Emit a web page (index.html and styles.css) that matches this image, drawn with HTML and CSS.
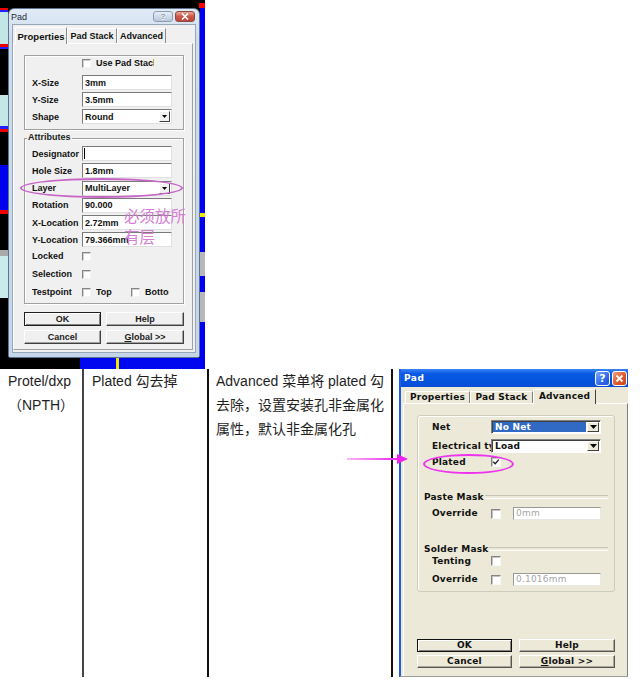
FILE: index.html
```html
<!DOCTYPE html>
<html lang="zh-CN">
<head>
<meta charset="utf-8">
<title>Pad</title>
<link rel="stylesheet" href="styles.css">
</head>
<body>
<div class="shot">
  <div class="dlg1">
    <div class="tb1">
      <span class="tb1-title">Pad</span>
      <span class="tb1-btns">
        <span class="tb1-q">?</span>
        <span class="tb1-x"><svg width="8" height="7" viewBox="0 0 8 7"><path d="M1 0.5L7 6.5M7 0.5L1 6.5" stroke="#fff" stroke-width="1.6"/></svg></span>
      </span>
    </div>
    <div class="cl1">
      <div class="tabs1">
        <span class="t1 t1-sel t1-w1">Properties</span><span class="t1 t1-w2">Pad Stack</span><span class="t1 t1-w3">Advanced</span>
      </div>
      <div class="pn1">
        <div class="gb1 gb1-a">
          <div class="r1 r1-cb"><span class="lab1"></span><span class="cb1"></span><span class="cbt1 cbt1-use">Use Pad Stack</span></div>
          <div class="r1"><span class="lab1">X-Size</span><span class="in1">3mm</span></div>
          <div class="r1"><span class="lab1">Y-Size</span><span class="in1">3.5mm</span></div>
          <div class="r1"><span class="lab1">Shape</span><span class="in1 sel1"><span class="selv1">Round</span><span class="dd1"><svg width="5" height="3" viewBox="0 0 5 3"><path d="M0 0H5L2.5 3Z" fill="#000"/></svg></span></span></div>
        </div>
        <div class="gb1 gb1-b">
          <span class="lg1">Attributes</span>
          <div class="r1"><span class="lab1">Designator</span><span class="in1"><span class="caret1"></span></span></div>
          <div class="r1"><span class="lab1">Hole Size</span><span class="in1">1.8mm</span></div>
          <div class="r1"><span class="lab1">Layer</span><span class="in1 sel1"><span class="selv1">MultiLayer</span><span class="dd1"><svg width="5" height="3" viewBox="0 0 5 3"><path d="M0 0H5L2.5 3Z" fill="#000"/></svg></span></span></div>
          <div class="r1"><span class="lab1">Rotation</span><span class="in1">90.000</span></div>
          <div class="r1"><span class="lab1">X-Location</span><span class="in1">2.72mm</span></div>
          <div class="r1"><span class="lab1">Y-Location</span><span class="in1">79.366mm</span></div>
          <div class="r1 r1-cb"><span class="lab1">Locked</span><span class="cb1"></span></div>
          <div class="r1 r1-cb"><span class="lab1">Selection</span><span class="cb1"></span></div>
          <div class="r1 r1-cb"><span class="lab1">Testpoint</span><span class="cb1"></span><span class="cbt1 cbt1-top">Top</span><span class="cb1"></span><span class="cbt1 cbt1-bot">Bottom</span></div>
        </div>
        <div class="bt1row bt1row-a"><span class="bt1 bt1-def bt1-w1">OK</span><span class="bt1 bt1-w2">Help</span></div>
        <div class="bt1row bt1row-b"><span class="bt1 bt1-w1">Cancel</span><span class="bt1 bt1-w2"><u>G</u>lobal &gt;&gt;</span></div>
      </div>
    </div>
  </div>
  <span class="ell1"></span>
  <span class="note1">必须放所有层</span>
</div>

<div class="tbl">
  <div class="c c1">Protel/dxp<br>（NPTH）</div>
  <div class="c c2">Plated 勾去掉</div>
  <div class="c c3">Advanced 菜单将 plated 勾去除，设置安装孔非金属化属性，默认非金属化孔</div>
  <div class="c c4">
    <div class="dlg2">
      <div class="tb2">
        <span class="tb2-title">Pad</span>
        <span class="tb2-btns">
          <span class="tb2-q">?</span>
          <span class="tb2-x"><svg width="9" height="9" viewBox="0 0 9 9"><path d="M1.5 1.5L7.5 7.5M7.5 1.5L1.5 7.5" stroke="#fff" stroke-width="1.8"/></svg></span>
        </span>
      </div>
      <div class="tabs2">
        <span class="t2 t2-w1">Properties</span><span class="t2 t2-w2">Pad Stack</span><span class="t2 t2-sel t2-w3">Advanced</span>
      </div>
      <div class="pn2">
        <div class="gb2">
          <div class="r2"><span class="lab2">Net</span><span class="sel2"><span class="selv2 selv2-hl">No Net</span><span class="dd2"><svg width="7" height="4" viewBox="0 0 7 4"><path d="M0 0H7L3.5 4Z" fill="#000"/></svg></span></span></div>
          <div class="r2 r2-elec"><span class="lab2">Electrical type</span><span class="sel2"><span class="selv2">Load</span><span class="dd2"><svg width="7" height="4" viewBox="0 0 7 4"><path d="M0 0H7L3.5 4Z" fill="#000"/></svg></span></span></div>
          <div class="r2 r2-cb r2-plated"><span class="lab2">Plated</span><span class="cb2"><svg width="8" height="8" viewBox="0 0 8 8"><path d="M1.2 3.8L3.2 5.8L6.8 1.6" fill="none" stroke="#222" stroke-width="1.4"/></svg></span></div>
          <div class="lg2 lg2-paste">Paste Mask</div>
          <div class="r2 r2-in r2-po"><span class="lab2">Override</span><span class="cb2"></span><span class="in2">0mm</span></div>
          <div class="lg2 lg2-solder">Solder Mask</div>
          <div class="r2 r2-cb"><span class="lab2">Tenting</span><span class="cb2"></span></div>
          <div class="r2 r2-in r2-so"><span class="lab2">Override</span><span class="cb2"></span><span class="in2">0.1016mm</span></div>
        </div>
        <div class="bt2row bt2row-a"><span class="bt2 bt2-def bt2-w1">OK</span><span class="bt2 bt2-w2">Help</span></div>
        <div class="bt2row bt2row-b"><span class="bt2 bt2-w1">Cancel</span><span class="bt2 bt2-w2"><u>G</u>lobal &gt;&gt;</span></div>
      </div>
    </div>
  </div>
  <svg class="arrow" width="64" height="14" viewBox="0 0 64 14">
    <defs><linearGradient id="ag" gradientUnits="userSpaceOnUse" x1="2" y1="0" x2="54" y2="0"><stop offset="0" stop-color="#f8b8f8"/><stop offset="1" stop-color="#ee22ee"/></linearGradient></defs>
    <rect x="2" y="6" width="52" height="2" fill="url(#ag)"/>
    <path d="M52 2L63 7L52 12Z" fill="#ee22ee"/>
  </svg>
  <span class="ell2"></span>
</div>
</body>
</html>
```

FILE: styles.css
```css
* { box-sizing: border-box; margin: 0; padding: 0; }
html, body { background: #fff; }
body {
  width: 643px;
  height: 686px;
  overflow: hidden;
  font-family: "Liberation Sans", Arial, "Noto Sans CJK SC", sans-serif;
  color: #1c1c1c;
}

/* ---------- top screenshot ---------- */
.shot {
  position: relative;
  width: 205px;
  height: 369px;
  padding: 8px 0 0 8px;
  background-color: #000;
  background-repeat: no-repeat;
  background-image:
    linear-gradient(#f00, #f00),
    linear-gradient(to bottom, #000 0 8px, #0000f4 8px 213px, #f2e600 213px 217px, #0000f4 217px 252px, #b8b8b8 252px 276px, #0000f4 276px 292px, #b8b8b8 292px 322px, #0000f4 322px),
    linear-gradient(to bottom, #000 0 8px, #e00 8px 10px, #2222ff 10px 12px, #c2e6e6 12px 44px, #e00 44px 47px, #2222ff 47px 49px, #000 49px 95px, #c4e6e6 95px 126px, #2222ff 126px 129px, #e00 129px 132px, #000 132px 165px, #0000ee 165px 210px, #e00 210px 214px, #000 214px 250px, #aaa 250px 256px, #c8ecec 256px 298px, #000 298px),
    linear-gradient(to right, #000 0 80px, #0008f0 80px 116px, #f5e400 116px 119px, #0008f0 119px);
  background-size: 6px 5px, 5px 100%, 8px 100%, 100% 11px;
  background-position: right 0 top 3px, right top, left top, left bottom;
}

.dlg1 {
  width: 192px;
  height: 350px;
  display: flex;
  flex-direction: column;
  padding: 0 3px 4px;
  border: 1px solid #5d7390;
  border-radius: 6px 6px 2px 2px;
  background: linear-gradient(#e2ebf6, #cddcee 30px, #c5d6ea);
}
.tb1 {
  height: 15px;
  flex: none;
  display: flex;
  align-items: center;
  justify-content: space-between;
}
.tb1-title { font-size: 9px; color: #1e2a3a; margin-left: -1px; }
.tb1-btns { display: flex; gap: 2px; margin-right: 1px; }
.tb1-q, .tb1-x {
  width: 20px;
  height: 11px;
  border-radius: 3px;
  display: flex;
  align-items: center;
  justify-content: center;
}
.tb1-q {
  border: 1px solid #8c9db3;
  background: linear-gradient(#e6edf6, #b9c8da);
  font-size: 8px;
  font-weight: bold;
  color: #8a97a8;
  text-shadow: 0 1px 0 #fff;
}
.tb1-x {
  border: 1px solid #8d4a45;
  background: linear-gradient(#eaa698, #cc5849 50%, #c0463a);
}

.cl1 {
  flex: 1;
  display: flex;
  flex-direction: column;
  background: #f0f0f0;
  border: 1px solid #97a6b8;
  padding: 0 2px 2px 0;
}
.tabs1 {
  height: 18px;
  flex: none;
  display: flex;
  align-items: flex-end;
  padding-left: 2px;
}
.t1 {
  height: 15px;
  display: flex;
  align-items: center;
  justify-content: center;
  border: 1px solid;
  border-color: #fff #8a8a8a transparent #fff;
  border-bottom: none;
  font-size: 9px;
  font-weight: bold;
  white-space: nowrap;
  color: #111;
}
.t1-sel {
  height: 17px;
  margin-bottom: -1px;
  position: relative;
  z-index: 1;
  background: #f0f0f0;
  font-size: 9.5px;
}
.t1-w1 { width: 52px; }
.t1-w2 { width: 50px; }
.t1-w3 { width: 49px; }

.pn1 {
  flex: 1;
  display: flex;
  flex-direction: column;
  border: 1px solid;
  border-color: #fff #a0a0a0 #a0a0a0 #fff;
  padding-left: 10px;
}
.gb1 {
  width: 160px;
  flex: none;
  display: flex;
  flex-direction: column;
  border: 1px solid #a0a0a0;
  box-shadow: inset 1px 1px 0 #fff, 1px 1px 0 #fff;
  padding-left: 7px;
}
.gb1-a { margin-top: 11px; height: 75px; }
.gb1-b { margin-top: 8px; height: 166px; padding-top: 7px; position: relative; }
.lg1 {
  position: absolute;
  top: -7px;
  left: 2px;
  padding: 0 1px;
  background: #f0f0f0;
  font-size: 9px;
  font-weight: bold;
  line-height: 11px;
}

.r1 {
  height: 15px;
  flex: none;
  display: flex;
  align-items: center;
  font-size: 9px;
  font-weight: bold;
  white-space: nowrap;
  color: #111;
}
.r1-cb { height: 14px; }
.gb1-a .r1 + .r1 { margin-top: 2px; }
.gb1-a .r1-cb + .r1 { margin-top: 5px; }
.gb1-b .r1 + .r1 { margin-top: 2.25px; }
.gb1-b .r1 + .r1-cb { margin-top: 1.75px; }
.gb1-b .r1-cb + .r1-cb { margin-top: 4px; }

.lab1 { width: 50px; flex: none; overflow: hidden; }
.in1 {
  width: 90px;
  height: 15px;
  flex: none;
  display: flex;
  align-items: center;
  padding-left: 2px;
  overflow: hidden;
  background: #fff;
  border: 1px solid;
  border-color: #7a7a7a #e0e0e0 #e0e0e0 #7a7a7a;
  color: #111;
}
.sel1 { padding-right: 1px; }
.selv1 { flex: 1; }
.dd1 {
  width: 11px;
  height: 11px;
  flex: none;
  display: flex;
  align-items: center;
  justify-content: center;
  background: #f0f0f0;
  border: 1px solid;
  border-color: #fff #404040 #404040 #fff;
}
.caret1 { width: 1px; height: 11px; background: #000; margin-left: -1px; }
.cb1 {
  width: 9px;
  height: 9px;
  flex: none;
  background: #fff;
  border: 1px solid;
  border-color: #858585 #f4f4f4 #f4f4f4 #858585;
  box-shadow: inset 1px 1px 0 #d0d0d0;
}
.cbt1 { margin-left: 5px; overflow: hidden; }
.cbt1-use { width: 58px; }
.cbt1-top { width: 35px; }
.cbt1-bot { width: 24px; }

.bt1row { display: flex; gap: 5px; flex: none; }
.bt1row-a { margin-top: 8px; }
.bt1row-b { margin-top: 4px; }
.bt1 {
  height: 14px;
  display: flex;
  align-items: center;
  justify-content: center;
  background: #f0f0f0;
  border: 1px solid;
  border-color: #fff #404040 #404040 #fff;
  box-shadow: inset -1px -1px 0 #a0a0a0;
  font-size: 9px;
  font-weight: bold;
  white-space: nowrap;
}
.bt1-def {
  border-color: #202020;
  box-shadow: inset 1px 1px 0 #fff, inset -1px -1px 0 #808080;
}
.bt1-w1 { width: 77px; }
.bt1-w2 { width: 78px; }

.ell1 {
  position: absolute;
  left: 20px;
  top: 178px;
  width: 163px;
  height: 20px;
  border: 2px solid #c864c8;
  border-radius: 50%;
}
.note1 {
  position: absolute;
  left: 124px;
  top: 205px;
  width: 64px;
  font-family: "Noto Sans CJK SC", sans-serif;
  font-size: 15.5px;
  line-height: 21px;
  color: #d47ed4;
}

/* ---------- table ---------- */
.tbl {
  position: relative;
  display: grid;
  grid-template-columns: 82px 125px 184px 1fr;
  height: 308px;
  font-size: 14px;
  line-height: 24px;
  color: #1e1e1e;
}
.c1 { padding-left: 8px; }
.c2 { border-left: 2px solid #444; padding-left: 8px; }
.c3 { border-left: 2px solid #111; padding-left: 7px; }
.c4 { border-left: 2px solid #111; padding-left: 6px; }

.arrow { position: absolute; left: 345px; top: 83px; }
.ell2 {
  position: absolute;
  left: 423px;
  top: 85px;
  width: 91px;
  height: 20px;
  border: 2px solid #ee33ee;
  border-radius: 50%;
}

/* ---------- XP dialog ---------- */
.dlg2 {
  width: 229px;
  height: 308px;
  display: flex;
  flex-direction: column;
  background: #ece9d8;
  border-left: 2px solid #1d5fe0;
  border-bottom: 1px solid #9d9d95;
  font-family: "DejaVu Sans", Verdana, sans-serif;
  font-size: 9px;
  font-weight: bold;
  letter-spacing: 0.2px;
  line-height: 1;
  color: #111;
}
.tb2 {
  height: 18px;
  flex: none;
  display: flex;
  align-items: center;
  justify-content: space-between;
  padding-left: 3px;
  background: linear-gradient(#3b86f5, #0a5ae6 25%, #0453df 70%, #0a4cd2);
}
.tb2-title { color: #fff; letter-spacing: 0.5px; }
.tb2-btns { display: flex; gap: 2px; margin-right: 1px; }
.tb2-q, .tb2-x {
  width: 15px;
  height: 15px;
  border: 1px solid #fff;
  border-radius: 3px;
  display: flex;
  align-items: center;
  justify-content: center;
  color: #fff;
}
.tb2-q { background: linear-gradient(135deg, #7aaaff, #2f68ea 60%, #1f55d8); font-size: 11px; }
.tb2-x { background: linear-gradient(135deg, #f3a07a, #e0592f 55%, #cc4418); }

.tabs2 {
  height: 14px;
  margin-top: 2px;
  flex: none;
  display: flex;
  align-items: flex-end;
  padding-left: 4px;
}
.t2 {
  height: 12px;
  display: flex;
  align-items: center;
  justify-content: center;
  border: 1px solid;
  border-color: #fff #808080 transparent #fff;
  border-bottom: none;
  white-space: nowrap;
}
.t2-sel {
  height: 15px;
  margin-bottom: -1px;
  position: relative;
  z-index: 1;
  background: #ece9d8;
  border-right-color: #404040;
  padding-bottom: 2px;
}
.t2-w1 { width: 65px; }
.t2-w2 { width: 63px; }
.t2-w3 { width: 63px; }

.pn2 {
  flex: 1;
  display: flex;
  flex-direction: column;
  margin-left: 2px;
  border-top: 1px solid #fff;
  border-left: 1px solid #fff;
  border-right: 1px solid #808080;
  padding-left: 13px;
}
.gb2 {
  width: 198px;
  height: 177px;
  flex: none;
  margin-top: 11px;
  display: flex;
  flex-direction: column;
  padding-top: 4px;
  border: 1px solid #cdcdbd;
  border-radius: 3px;
  box-shadow: inset 1px 1px 0 #fff;
}
.r2 {
  height: 14px;
  flex: none;
  display: flex;
  align-items: center;
  padding-left: 14px;
  white-space: nowrap;
}
.r2-cb { height: 12px; }
.r2-in { height: 13px; }
.r2-elec { margin-top: 5px; }
.r2-plated { margin-top: 3px; }
.r2-po { margin-top: 4px; }
.r2-so { margin-top: 6px; }
.lab2 { width: 59px; flex: none; overflow: hidden; }

.sel2 {
  width: 110px;
  height: 14px;
  flex: none;
  display: flex;
  align-items: stretch;
  padding: 1px;
  background: #fff;
  border: 1px solid;
  border-color: #808080 #fff #fff #808080;
  box-shadow: inset 1px 1px 0 #404040;
}
.selv2 {
  flex: 1;
  display: flex;
  align-items: center;
  padding-left: 2px;
  margin-right: 1px;
}
.selv2-hl { background: #316ac5; color: #fff; }
.dd2 {
  width: 12px;
  flex: none;
  display: flex;
  align-items: center;
  justify-content: center;
  background: #ece9d8;
  border: 1px solid;
  border-color: #fff #404040 #404040 #fff;
}
.cb2 {
  width: 10px;
  height: 10px;
  flex: none;
  display: flex;
  align-items: center;
  justify-content: center;
  background: #fff;
  border: 1px solid;
  border-color: #858585 #f8f8f8 #f8f8f8 #858585;
  box-shadow: inset 1px 1px 0 #c4c4c4;
}
.in2 {
  width: 88px;
  height: 13px;
  flex: none;
  margin-left: 12px;
  display: flex;
  align-items: center;
  padding-left: 2px;
  background: #fff;
  border: 1px solid;
  border-color: #9a9a94 #e8e8e2 #e8e8e2 #9a9a94;
  font-weight: normal;
  color: #a6a6a6;
}
.lg2 {
  height: 12px;
  flex: none;
  display: flex;
  align-items: center;
  padding: 0 6px;
  white-space: nowrap;
}
.lg2::after {
  content: "";
  flex: 1;
  height: 2px;
  border-top: 1px solid #c5c5b5;
  border-bottom: 1px solid #fff;
  margin-left: 1px;
}
.lg2-paste { margin-top: 23px; }
.lg2-solder { margin-top: 23px; }

.bt2row { display: flex; gap: 7px; flex: none; }
.bt2row-a { margin-top: 47px; }
.bt2row-b { margin-top: 3px; }
.bt2 {
  height: 13px;
  display: flex;
  align-items: center;
  justify-content: center;
  background: #ece9d8;
  border: 1px solid;
  border-color: #fff #555 #555 #fff;
  box-shadow: inset -1px -1px 0 #aca899;
  white-space: nowrap;
}
.bt2-def {
  border-color: #111;
  box-shadow: inset 1px 1px 0 #fff, inset -1px -1px 0 #808080;
}
.bt2-w1 { width: 95px; }
.bt2-w2 { width: 96px; }
```
